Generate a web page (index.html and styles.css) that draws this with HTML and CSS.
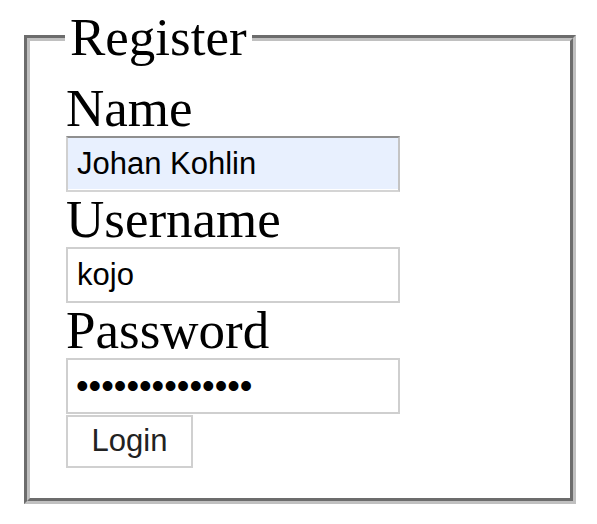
FILE: index.html
```html
<!DOCTYPE html>
<html>
<head>
<meta charset="utf-8">
<link rel="stylesheet" href="styles.css">
</head>
<body>
<form class="register">
  <fieldset class="box">
    <legend class="box-title">Register</legend>
    <label class="field-label" for="name">Name</label>
    <input class="field-input autofilled" id="name" type="text" value="Johan Kohlin">
    <label class="field-label" for="username">Username</label>
    <input class="field-input" id="username" type="text" value="kojo">
    <label class="field-label" for="password">Password</label>
    <input class="field-input secret" id="password" type="password" value="secretpasswd12">
    <button class="login-btn" type="button">Login</button>
  </fieldset>
</form>
</body>
</html>
```

FILE: styles.css
```css
html, body {
  margin: 0;
  padding: 0;
  background: #ffffff;
}

.register {
  padding: 10px 0 0 24px;
}

.box {
  box-sizing: border-box;
  width: 552px;
  margin: 0;
  border: 6px groove #c0c0c0;
  padding: 15.5px 30px 30px 36px;
  font-family: "Liberation Serif", "Times New Roman", serif;
  font-size: 53px;
  color: #000;
}

.box-title {
  padding: 0 5px;
  margin-left: -1px;
  line-height: 55px;
}

.field-label {
  display: block;
  line-height: 55.5px;
  height: 55.5px;
}

.field-input {
  display: block;
  box-sizing: border-box;
  width: 334px;
  height: 55.5px;
  margin: 0;
  padding: 0 9px;
  border: 2px solid #cfcfcf;
  background: #ffffff;
  font-family: "Liberation Sans", Arial, sans-serif;
  font-size: 31px;
  color: #000;
  outline: none;
}

.field-input.secret {
  font-size: 36px;
  padding-left: 8px;
}

.field-input.autofilled {
  background: #e8f0fe;
  border-top-color: #8f8f8f;
  border-left-color: #d0d0d0;
  border-right-color: #c4c4c4;
  border-bottom-color: #d4d4d4;
  box-shadow: inset 0 -1px 0 #ffffff;
}

.login-btn {
  display: block;
  box-sizing: border-box;
  width: 127px;
  height: 53px;
  margin: 1px 0 0 0;
  padding: 0;
  border: 2px solid #d0d0d0;
  background: #ffffff;
  font-family: "Liberation Sans", Arial, sans-serif;
  font-size: 31px;
  color: #222;
}
```
